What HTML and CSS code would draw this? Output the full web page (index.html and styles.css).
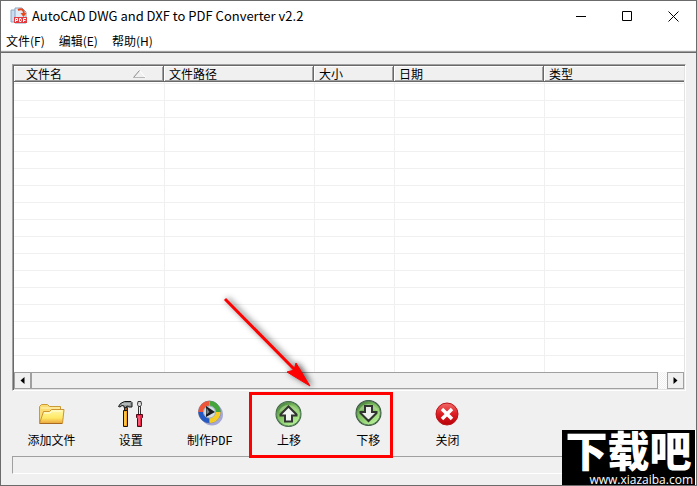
FILE: index.html
```html
<!DOCTYPE html>
<html lang="zh-CN">
<head>
<meta charset="utf-8">
<title>AutoCAD DWG and DXF to PDF Converter v2.2</title>
<link rel="stylesheet" href="styles.css">
</head>
<body>
<div class="window">
  <header class="titlebar">
    <svg class="app-icon" width="18" height="18" viewBox="0 0 18 18" aria-hidden="true">
      <path d="M1 3h6v12H1z" fill="#c9dcf0" stroke="#8ca6c4"/>
      <path d="M5 1h7l4 4v11H5z" fill="#dfeaf7" stroke="#8aa3c2"/>
      <path d="M8 3c4-2 6 0 6 4" fill="none" stroke="#e8481c" stroke-width="2"/>
      <path d="M10.500 6h6l-3 4z" fill="#e8481c"/>
      <path d="M4 10h13v6H4z" fill="#e33a40"/>
      <path d="M5.500 15v-3.500h2v2h-2M9.500 11.500v3h1.500l.5-1-.5-2zM13.500 15v-3.500h2.500M13.500 13.500h2" fill="none" stroke="#fff"/>
    </svg>
    <h1 class="title">AutoCAD DWG and DXF to PDF Converter v2.2</h1>
    <div class="captions">
      <button class="caption" aria-label="最小化"><svg width="11" height="11" viewBox="0 0 11 11"><path d="M0 5.500h10" stroke="#000"/></svg></button>
      <button class="caption" aria-label="最大化"><svg width="11" height="11" viewBox="0 0 11 11"><path d="M.5.5h9v9h-9z" fill="none" stroke="#000"/></svg></button>
      <button class="caption" aria-label="关闭窗口"><svg width="11" height="11" viewBox="0 0 11 11"><path d="M.5.5l10 10M10.500.5l-10 10" stroke="#000"/></svg></button>
    </div>
  </header>
  <nav class="menubar">
    <button class="menu">文件(F)</button>
    <button class="menu">编辑(E)</button>
    <button class="menu">帮助(H)</button>
  </nav>
  <main class="content">
    <section class="list">
      <table class="files">
        <colgroup><col class="c-wide"><col class="c-wide"><col class="c-small"><col class="c-wide"><col></colgroup>
        <thead>
          <tr>
            <th class="first"><span class="sorted">文件名
              <svg width="13" height="8" viewBox="0 0 13 8" aria-hidden="true"><path d="M6.500.5l6 7" fill="none" stroke="#fff"/><path d="M.5 7.500L6.500.5" stroke="#888"/><path d="M0 7.500h12" stroke="#b8b8b8"/></svg></span></th>
            <th>文件路径</th><th>大小</th><th>日期</th><th class="last">类型</th>
          </tr>
        </thead>
        <tbody><tr><td></td><td></td><td></td><td></td><td></td></tr></tbody>
      </table>
      <div class="scrollbar">
        <button class="step" aria-label="向左滚动"><svg width="5" height="7" viewBox="0 0 5 7"><path d="M4.500 0v7L.5 3.500z"/></svg></button>
        <div class="thumb"></div>
        <button class="step" aria-label="向右滚动"><svg width="5" height="7" viewBox="0 0 5 7"><path d="M.5 0v7l4-3.500z"/></svg></button>
      </div>
    </section>
    <div class="toolbar">
      <button class="tool">
        <svg width="28" height="28" viewBox="0 0 28 28" aria-hidden="true">
          <defs><linearGradient id="folder" x2="0" y2="1"><stop offset="0" stop-color="#fff7a8"/><stop offset=".6" stop-color="#ffe866"/><stop offset="1" stop-color="#e9a43c"/></linearGradient></defs>
          <path d="M1.500 23.500V6.500l2-2h6l2 2h11v17z" fill="#fbdc72" stroke="#c99a35"/>
          <path d="M3 8h19" stroke="#fff6bd"/>
          <path d="M1.500 23.500L5.500 11.500h6l2-2h12.500l-1.500 14z" fill="url(#folder)" stroke="#cc9433"/>
          <path d="M6 13h6l2-2h10" fill="none" stroke="#fffde0"/>
          <path d="M2 23.500h22" stroke="#a86a22"/>
        </svg>
        <span>添加文件</span>
      </button>
      <button class="tool">
        <svg width="28" height="28" viewBox="0 0 28 28" aria-hidden="true">
          <path d="M1.500 6.500l2-3 4-2h6.500l1 1V7h-3l-2-1-1 1.500H7V6L5 5.500 3 7z" fill="#909596" stroke="#151515"/>
          <path d="M5 4h8" stroke="#d5dada"/>
          <path d="M7.500 7.500h3v3h-3z" fill="#a05a20" stroke="#222"/>
          <path d="M6.500 10.500h4v16h-4z" fill="#f2a51a" stroke="#1a1308"/>
          <path d="M8 12v13" stroke="#ffe37a"/>
          <path d="M21 1.500h3l.5 3-1 2h-2l-1-2z" fill="#ddd" stroke="#333"/>
          <path d="M21.500 6.500h2v8h-2z" fill="#eee" stroke="#333"/>
          <path d="M19.500 14.500h6v3l-1 1v8h-4v-8l-1-1z" fill="#ea2748" stroke="#4b0713"/>
          <path d="M22 16v9" stroke="#ff8fa0"/>
        </svg>
        <span>设置</span>
      </button>
      <button class="tool">
        <svg width="28" height="28" viewBox="0 0 28 28" aria-hidden="true">
          <circle cx="16" cy="14.500" r="11" fill="#a5a7d6"/>
          <circle cx="13.500" cy="12" r="11" fill="#fff" stroke="#777e9b"/>
          <path d="M13.500 12V1A11 11 0 0 0 2.500 12z" fill="#ec5538"/>
          <path d="M13.500 12V1a11 11 0 0 1 11 11z" fill="#43a53a"/>
          <path d="M13.500 12h11a11 11 0 0 1-11 11z" fill="#f5cc24"/>
          <path d="M13.500 12v11a11 11 0 0 1-11-11z" fill="#2459c4"/>
          <circle cx="13.500" cy="12" r="6" fill="#d3dde5" stroke="#a2adba"/>
          <path d="M10 6l9 6-9 5z" fill="#181c20"/>
          <path d="M10.500 8l3 4-3 2.500z" fill="#7b858b"/>
        </svg>
        <span>制作<span class="latin">PDF</span></span>
      </button>
      <button class="tool">
        <svg width="28" height="28" viewBox="0 0 28 28" aria-hidden="true">
          <defs><linearGradient id="green" x2=".7" y2="1"><stop offset="0" stop-color="#2d672b"/><stop offset=".4" stop-color="#76b858"/><stop offset="1" stop-color="#b7f397"/></linearGradient></defs>
          <circle cx="13.500" cy="14" r="13" fill="#305e35"/>
          <circle cx="13.500" cy="14" r="12" fill="url(#green)" stroke="#608764"/>
          <path d="M4 12a10 10 0 0 1 19 0c-6-3-12-3-19 0z" fill="#b6dc99" opacity=".6"/>
          <path d="M13.500 6.500l8 8v1h-4.500v6h-7v-6H5.500v-1z" fill="#f3f5f3" stroke="#303530" stroke-width="2"/>
        </svg>
        <span>上移</span>
      </button>
      <button class="tool">
        <svg width="28" height="28" viewBox="0 0 28 28" aria-hidden="true">
          <circle cx="14.500" cy="13" r="13" fill="#2b4d32"/>
          <circle cx="14.500" cy="13" r="12" fill="url(#green)" stroke="#58775d"/>
          <path d="M5 11a10 10 0 0 1 19 0c-6-3-12-3-19 0z" fill="#b6dc99" opacity=".6"/>
          <path d="M14.500 21l-8-8v-1h4.500V6h7v6h4.500v1z" fill="#edf0ed" stroke="#303530" stroke-width="2"/>
        </svg>
        <span>下移</span>
      </button>
      <button class="tool">
        <svg width="28" height="28" viewBox="0 0 28 28" aria-hidden="true">
          <defs><linearGradient id="red" x2="0" y2="1"><stop offset="0" stop-color="#f16b67"/><stop offset=".5" stop-color="#dc1d23"/><stop offset="1" stop-color="#b80008"/></linearGradient></defs>
          <circle cx="14" cy="14" r="11" fill="url(#red)" stroke="#b9151b"/>
          <path d="M9 9l10 10M19 9L9 19" stroke="#fff" stroke-width="3.500"/>
        </svg>
        <span>关闭</span>
      </button>
      <div class="highlight"></div>
      <svg class="pointer" width="100" height="104" viewBox="0 0 100 104" aria-hidden="true">
        <g class="pointer-shape">
          <path d="M6 7l70 71" stroke="#f00" stroke-width="3"/>
          <path d="M91 94l-23-14 7-2 2-7z" fill="#f00" stroke="#f00"/>
        </g>
      </svg>
    </div>
    <div class="statusbar"></div>
  </main>
  <aside class="watermark">
    <span class="brand">下载吧</span>
    <span class="site">www.xiazaiba.com</span>
  </aside>
</div>
</body>
</html>
```
FILE: styles.css
```css
* { box-sizing: border-box; }
body {
  margin: 0;
  font: 12px/16px "Noto Sans CJK SC", sans-serif;
  color: #000;
}
button {
  margin: 0;
  padding: 0;
  border: 0;
  background: none;
  font: inherit;
  color: inherit;
}
svg {
  display: block;
  flex: none;
}

.window {
  position: relative;
  display: flex;
  flex-direction: column;
  height: 100vh;
  border: 1px solid #6b6b6b;
  background: #f0f0f0;
  overflow: hidden;
}
.titlebar {
  display: flex;
  align-items: center;
  height: 30px;
  padding-left: 9px;
  background: #fff;
}
.title {
  flex: 1;
  margin: 0 0 0 4px;
  font: 13px/18px "Noto Sans CJK SC", sans-serif;
}
.captions { display: flex; }
.caption {
  display: grid;
  place-items: center;
  width: 46px;
  height: 30px;
}
.menubar {
  display: flex;
  gap: 14px;
  height: 20px;
  padding: 0 5px;
  background: #fff;
  border-bottom: 1px solid #f0f0f0;
}

.content {
  flex: 1;
  display: flex;
  flex-direction: column;
  padding: 12px 10px 11px 11px;
  border-top: 1px solid #a0a0a0;
  box-shadow: inset 0 1px #696969;
}
.list {
  flex: 1;
  display: flex;
  flex-direction: column;
  border: 1px solid;
  border-color: #a0a0a0 #fff #fff #a0a0a0;
  padding: 1px;
  box-shadow: inset 1px 1px #696969, inset -1px -1px #e3e3e3;
  background: #fff;
}
.files {
  flex: 1;
  width: 100%;
  table-layout: fixed;
  border-collapse: separate;
  border-spacing: 0;
}
.c-wide { width: 150px; }
.c-small { width: 80px; }
.files th {
  height: 16px;
  padding: 0 5px;
  background: #f0f0f0;
  box-shadow: inset -1px -1px #696969, inset 1px 1px #fff, inset -2px -2px #a0a0a0;
  font-weight: 400;
  line-height: 16px;
  text-align: left;
}
.files .first { padding: 0 18px 0 12px; }
.files .last { box-shadow: inset 0 -1px #696969, inset 1px 1px #fff, inset 0 -2px #a0a0a0; }
.sorted {
  display: flex;
  align-items: center;
  justify-content: space-between;
}
.files td {
  height: 100%;
  padding: 0;
  background: repeating-linear-gradient(#fff 0 1px, #f0f0f0 1px 2px, #fff 2px 17px);
}
.files td + td { border-left: 1px solid #f0f0f0; }

.scrollbar {
  display: flex;
  height: 17px;
  background: repeating-conic-gradient(#fff 0 25%, #f0f0f0 0 50%) 0 0 / 2px 2px;
}
.step {
  display: grid;
  place-items: center;
  width: 17px;
  border: 1px solid #a0a0a0;
  background: #f0f0f0;
}
.thumb {
  flex: 1;
  margin-right: 9px;
  border: 1px solid #a0a0a0;
  background: #f0f0f0;
}

.toolbar {
  position: relative;
  display: grid;
  grid-template-columns: repeat(6, 1fr);
  max-width: 475px;
  height: 65px;
  padding-top: 9px;
}
.tool {
  display: flex;
  flex-direction: column;
  align-items: center;
  gap: 4px;
}
.latin { font: 12px/16px "Liberation Mono", monospace; }
.highlight {
  position: absolute;
  left: 237px;
  top: 1px;
  width: 144px;
  height: 66px;
  border: 3px solid #f00;
}
.pointer {
  position: absolute;
  left: 207px;
  top: -99px;
}
.pointer-shape { filter: drop-shadow(2px 0 3px rgba(0, 0, 0, .7)); }
.statusbar {
  height: 18px;
  border: 1px solid;
  border-color: #a0a0a0 #fff #fff #a0a0a0;
}

.watermark {
  position: absolute;
  right: 0;
  bottom: -1px;
  display: flex;
  flex-direction: column;
  justify-content: space-between;
  width: 134px;
  height: 56px;
  border-right: 1px solid #fff;
  background: #000;
  color: #fff;
}
.brand {
  font-size: 42px;
  font-weight: 900;
  line-height: 38px;
  text-align: center;
}
.site {
  padding-right: 2px;
  font: 12px/12px "Open Sans", sans-serif;
  text-align: right;
}
```
